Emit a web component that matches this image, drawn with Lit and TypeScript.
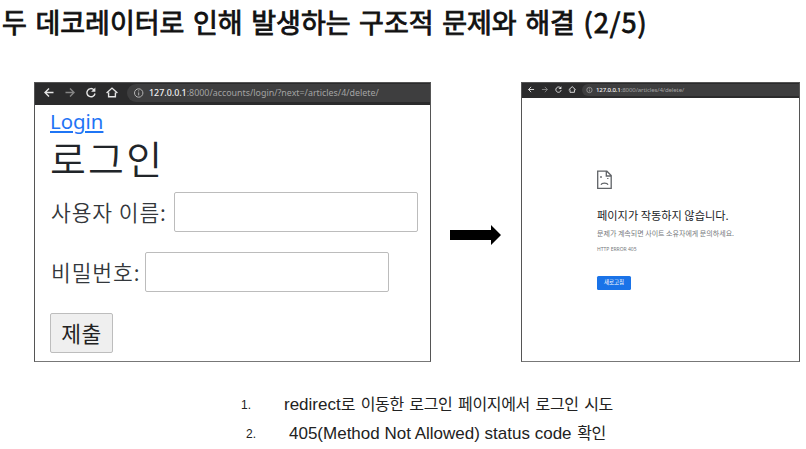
import { LitElement, html, css } from "lit";
import { customElement, property } from "lit/decorators.js";

@customElement("browser-bar")
class BrowserBar extends LitElement {
  @property() host = "127.0.0.1";
  @property() path = "";

  static styles = css`
    :host { display: block; box-sizing: border-box; background: #2b2b2c; overflow: hidden; }
    .bar { display: flex; height: 100%; align-items: center; }
    .icons { flex: none; width: var(--nav, 92px); height: 100%; }
    .pill {
      flex: 1; height: var(--pill, 18px); display: flex; align-items: center;
      background: #3e3e3f; border-radius: 9px 0 0 9px; color: #a3a3a3;
      font: var(--url, 8.9px) "Noto Sans", sans-serif; white-space: nowrap;
      letter-spacing: var(--ls, 0);
    }
    .info { flex: none; width: var(--info, 22px); height: 100%; }
    b { color: #f2f2f2; font-weight: 500; }
  `;

  render() {
    return html`<div class="bar">
      <svg class="icons" viewBox="0 0 92 18" fill="none" stroke="#e6e6e6" stroke-width="1.4">
        <g transform="translate(0 -1)">
          <path d="M18.5 10H10M14 6l-4 4 4 4" />
          <path d="M30.5 10H39M35 6l4 4-4 4" stroke="#858585" />
          <path d="M59 7.4A4.1 4.1 0 1 0 60 11" />
          <path d="M60.4 5v4.3h-4.3z" fill="#e6e6e6" stroke="none" />
          <path d="M71.6 10.6L77 5.6l5.4 5M73.6 10v4.3h6.8V10" />
        </g>
      </svg>
      <div class="pill">
        <svg class="info" viewBox="0 0 22 18" fill="none" stroke="#b4b4b4">
          <circle cx="11.7" cy="9" r="4.2" /><path d="M11.7 8.4v3M11.7 6.4v1" />
        </svg>
        <span><b>${this.host}</b>${this.path}</span>
      </div>
    </div>`;
  }
}

@customElement("app-root")
class AppRoot extends LitElement {
  static styles = css`
    :host {
      display: block; width: 806px; height: 449px; overflow: hidden; background: #fff;
      font-family: "Noto Sans CJK KR", sans-serif; color: #111; white-space: nowrap;
    }
    * { box-sizing: border-box; }
    h1, h2, p, ol { margin: 0; padding: 0; font-weight: 400; }
    .title { height: 82px; padding-left: 2px; font-size: 27px; line-height: 43px; word-spacing: 2.5px; -webkit-text-stroke: .85px #111; }
    .page { letter-spacing: 1.1px; }
    .row { display: flex; height: 280px; padding-left: 34px; }
    .shot { border: 1px solid #555; border-bottom: 1.5px solid #777; background: #fff; }
    .login { width: 397px; }
    .login browser-bar { height: 22px; padding-bottom: 3px; }
    .form { padding-left: 15px; color: #212529; }
    .link { display: block; width: max-content; height: 28px; margin-bottom: 3px; font: 20.4px/32px "Noto Sans", sans-serif; color: #1f75f5; text-decoration: underline; text-underline-offset: 2px; text-decoration-thickness: 1.5px; }
    .heading { height: 56px; font-size: 39px; line-height: 43px; letter-spacing: 2.2px; font-weight: 350; }
    .field { display: flex; height: 40px; margin-bottom: 20px; font-size: 21.5px; line-height: 39px; letter-spacing: .9px; }
    .label { flex: none; padding-left: 1px; color: #33373b; font-weight: 350; }
    .user { width: 124px; }
    .pass { width: 95px; }
    .input { width: 244px; border: 1px solid #bcbcbc; border-radius: 2px; }
    .submit { display: block; width: 63px; height: 40px; margin: 21px 0 0; border: 1px solid #bdbdbd; border-radius: 2px; background: #efefef; font: 21.5px/36px "Noto Sans CJK KR", sans-serif; color: #222; padding: 0; letter-spacing: .5px; text-align: center; }
    .arrow { width: 51px; height: 20px; margin: 143px 20px 0 19px; }
    .error { width: 279px; --nav: 60px; --pill: 12px; --url: 6.1px; --info: 14px; --ls: -.13px; }
    .error browser-bar { height: 15px; padding-bottom: 2px; }
    .body { padding: 72px 0 0 75px; }
    .sad { display: block; width: 15px; height: 20px; }
    .big { margin-top: 15px; font-size: 11.2px; line-height: 20px; color: #202124; }
    .small { font-size: 7px; line-height: 17px; color: #75787c; }
    .code { font: 5px/15px "Noto Sans", sans-serif; color: #75787c; }
    .reload { width: 34px; height: 14px; margin-top: 19px; border-radius: 1.5px; background: #1a73e8; color: #fff; font-size: 5.5px; line-height: 13px; text-align: center; }
    .notes { list-style: none; padding: 28px 0 0 241px; color: #222; font: 16px/29px "Liberation Sans", "Noto Sans CJK KR", sans-serif; }
    .note { display: flex; height: 29px; }
    .num { flex: none; width: 43px; font-size: 12px; line-height: 31px; }
    .second { padding-left: 5px; }
    .text { letter-spacing: -.35px; word-spacing: 1.5px; }
    .latin { font-size: 17px; letter-spacing: 0; word-spacing: 0; }
  `;

  render() {
    return html`
      <h1 class="title">두 데코레이터로 인해 발생하는 구조적 문제와 해결 <span class="page">(2/5)</span></h1>
      <div class="row">
        <section class="shot login">
          <browser-bar path=":8000/accounts/login/?next=/articles/4/delete/"></browser-bar>
          <div class="form">
            <a class="link">Login</a>
            <h2 class="heading">로그인</h2>
            <div class="field"><span class="label user">사용자 이름:</span><span class="input"></span></div>
            <div class="field"><span class="label pass">비밀번호:</span><span class="input"></span></div>
            <button class="submit">제출</button>
          </div>
        </section>
        <svg class="arrow" viewBox="0 0 51 20"><path d="M0 5h41V0l10 10-10 10v-5H0z" /></svg>
        <section class="shot error">
          <browser-bar path=":8000/articles/4/delete/"></browser-bar>
          <div class="body">
            <svg class="sad" viewBox="0 0 15 20" fill="none" stroke="#606367" stroke-width="1.3">
              <path d="M.7 1.2h9.2l4.3 4.3v12.9H.7zM9.3 1.2V6h4.9" />
              <path d="M4 6v2M10.8 8v1M4 14.8q.6-1.6 3.5-1.6t3.5 1.6" />
            </svg>
            <h2 class="big">페이지가 작동하지 않습니다.</h2>
            <p class="small">문제가 계속되면 사이트 소유자에게 문의하세요.</p>
            <p class="code">HTTP ERROR 405</p>
            <div class="reload">새로고침</div>
          </div>
        </section>
      </div>
      <ol class="notes">
        <li class="note first"><span class="num">1.</span><span class="text"><span class="latin">redirect</span>로 이동한 로그인 페이지에서 로그인 시도</span></li>
        <li class="note second"><span class="num">2.</span><span class="text"><span class="latin">405(Method Not Allowed) status code</span> 확인</span></li>
      </ol>`;
  }
}
